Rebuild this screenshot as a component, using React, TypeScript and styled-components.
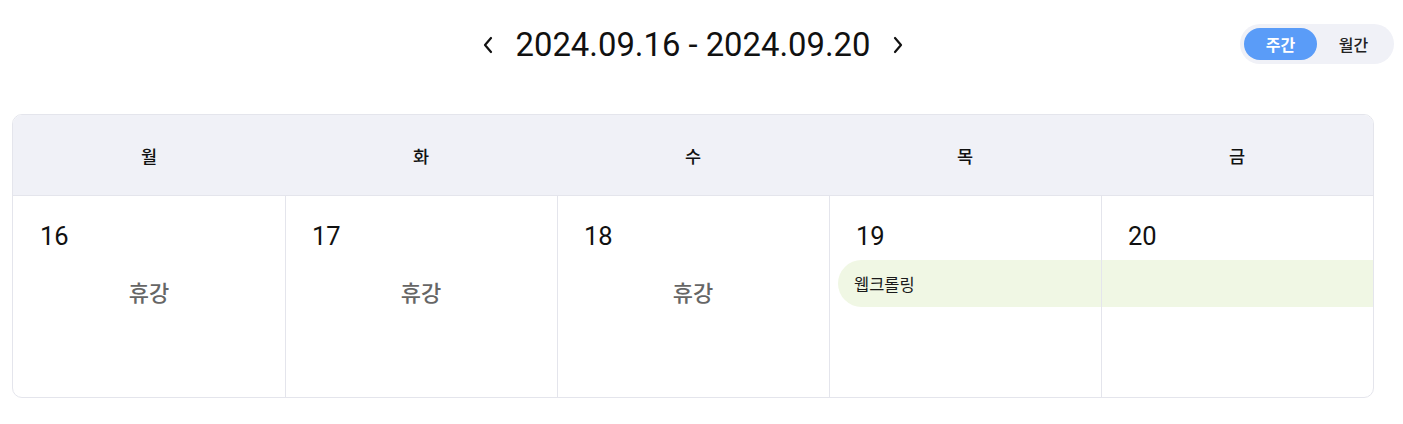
import styled, { createGlobalStyle } from 'styled-components'

const GlobalStyle = createGlobalStyle`
  body {
    margin: 0;
    background: #fff;
    font-family: Roboto, "Noto Sans CJK KR", sans-serif;
    color: #111;
  }
`

const Page = styled.div`
  padding: 23px 12px 0;
  width: 1362px;
`
const TopBar = styled.div`
  display: grid;
  grid-template-columns: 1fr auto 1fr;
  align-items: center;
  height: 40px;
  margin-bottom: 51px;
`
const DateNav = styled.div`
  grid-column: 2;
  display: flex;
  align-items: center;
  gap: 18px;
  padding-top: 2px;
`
const ArrowButton = styled.button`
  display: flex;
  align-items: center;
  justify-content: center;
  width: 20px;
  height: 24px;
  padding: 0;
  border: none;
  background: none;
  cursor: pointer;
  color: #111;
`
const RangeTitle = styled.h2`
  margin: 0;
  font-size: 32.8px;
  font-weight: 400;
  line-height: 40px;
  color: #111;
`
const Toggle = styled.div`
  grid-column: 3;
  justify-self: end;
  margin-right: -20px;
  display: flex;
  padding: 4px;
  border-radius: 20px;
  background: #f0f1f7;
`
const ToggleButton = styled.button<{ $active?: boolean }>`
  width: 73px;
  height: 32px;
  border: none;
  border-radius: 16px;
  font-family: inherit;
  font-size: 16px;
  font-weight: ${(p) => (p.$active ? 600 : 500)};
  color: ${(p) => (p.$active ? '#fff' : '#222')};
  background: ${(p) => (p.$active ? '#5a9cf8' : 'transparent')};
  cursor: pointer;
`
const Calendar = styled.div`
  border: 1px solid #e4e5ec;
  border-radius: 10px;
  overflow: hidden;
`
const HeadRow = styled.div`
  display: grid;
  grid-template-columns: repeat(5, 1fr);
  height: 80px;
  background: #f0f1f7;
  border-bottom: 1px solid #e4e5ec;
`
const HeadCell = styled.div`
  display: flex;
  align-items: center;
  justify-content: center;
  font-size: 17.5px;
  font-weight: 500;
  color: #111;
`
const Body = styled.div`
  display: grid;
  grid-template-columns: repeat(5, 1fr);
  grid-template-rows: 64px 47px 90px;
`
const DayNumber = styled.div<{ $col: number }>`
  grid-column: ${(p) => p.$col};
  grid-row: 1;
  padding: 25px 0 0 27px;
  font-size: 25.5px;
  line-height: 30px;
  color: #111;
`
const Holiday = styled.div<{ $col: number }>`
  grid-column: ${(p) => p.$col};
  grid-row: 2;
  align-self: end;
  text-align: center;
  font-size: 22px;
  font-weight: 500;
  line-height: 26px;
  color: #666;
`
const EventBar = styled.div<{ $start: number; $span: number }>`
  grid-column: ${(p) => p.$start} / span ${(p) => p.$span};
  grid-row: 2;
  display: flex;
  align-items: center;
  margin-left: 9px;
  padding-left: 16px;
  border-radius: 24px 0 0 24px;
  background: #f0f7e4;
  font-size: 16.5px;
  font-weight: 400;
  color: #1a1a1a;
`
const DayCell = styled.div<{ $col: number }>`
  grid-column: ${(p) => p.$col};
  grid-row: 1 / -1;
  border-left: ${(p) => (p.$col === 1 ? 'none' : '1px solid #e4e5ec')};
  pointer-events: none;
`

const Chevron = ({ dir }: { dir: 'left' | 'right' }) => (
  <svg width="12" height="18" viewBox="0 0 12 18" fill="none">
    <path
      d={dir === 'left' ? 'M9 2 L3 9 L9 16' : 'M3 2 L9 9 L3 16'}
      stroke="currentColor"
      strokeWidth="2.2"
      strokeLinecap="round"
      strokeLinejoin="round"
    />
  </svg>
)

const weekdays = ['월', '화', '수', '목', '금']
const days = [
  { date: 16, holiday: true },
  { date: 17, holiday: true },
  { date: 18, holiday: true },
  { date: 19, holiday: false },
  { date: 20, holiday: false },
]

const App = () => {
  return (
    <Page>
      <GlobalStyle />
      <TopBar>
        <DateNav>
          <ArrowButton aria-label="이전 주">
            <Chevron dir="left" />
          </ArrowButton>
          <RangeTitle>2024.09.16 - 2024.09.20</RangeTitle>
          <ArrowButton aria-label="다음 주">
            <Chevron dir="right" />
          </ArrowButton>
        </DateNav>
        <Toggle>
          <ToggleButton $active>주간</ToggleButton>
          <ToggleButton>월간</ToggleButton>
        </Toggle>
      </TopBar>

      <Calendar>
        <HeadRow>
          {weekdays.map((d) => (
            <HeadCell key={d}>{d}</HeadCell>
          ))}
        </HeadRow>
        <Body>
          {days.map((d, i) => (
            <DayNumber key={d.date} $col={i + 1}>
              {d.date}
            </DayNumber>
          ))}
          {days.map((d, i) =>
            d.holiday ? (
              <Holiday key={`h${d.date}`} $col={i + 1}>
                휴강
              </Holiday>
            ) : null
          )}
          <EventBar $start={4} $span={2}>
            웹크롤링
          </EventBar>
          {days.map((d, i) => (
            <DayCell key={`c${d.date}`} $col={i + 1} />
          ))}
        </Body>
      </Calendar>
    </Page>
  )
}

export default App
